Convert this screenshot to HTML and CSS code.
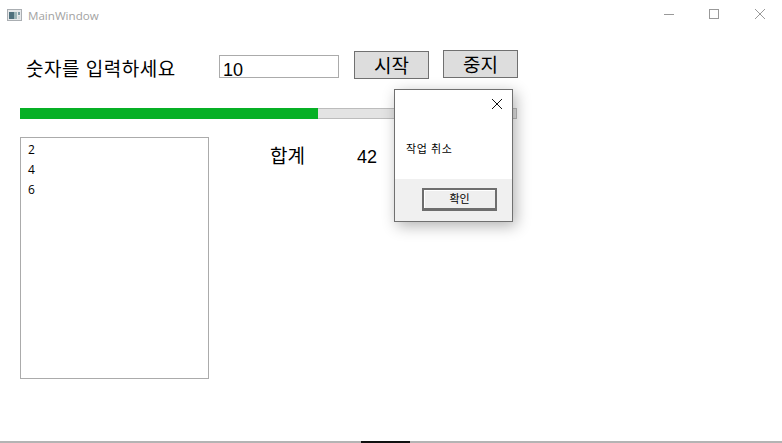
FILE: index.html
```html
<!DOCTYPE html>
<html lang="ko">
<head>
  <meta charset="UTF-8">
  <meta name="viewport" content="width=device-width, initial-scale=1.0">
  <title>MainWindow</title>
  <link rel="stylesheet" href="styles.css">
</head>
<body>
  <div class="window">
    <div class="titlebar">
      <svg class="app-icon" width="16" height="16" viewBox="0 0 16 16">
        <rect x="0.5" y="2.5" width="14" height="11" fill="#e6e8ea" stroke="#aaaeb2"/>
        <rect x="2" y="5" width="5" height="7" fill="#4f707d"/>
        <rect x="7" y="5" width="3" height="7" fill="#9db5b8"/>
        <rect x="11" y="5" width="2" height="3" fill="#7f9ba6"/>
        <rect x="11" y="9" width="2" height="3" fill="#d4d9db"/>
      </svg>
      <span class="app-name">MainWindow</span>
      <div class="win-buttons">
        <svg width="12" height="12" viewBox="0 0 12 12"><path d="M1 6.5H11" stroke="#999" fill="none"/></svg>
        <svg width="12" height="12" viewBox="0 0 12 12"><rect x="1.5" y="1.5" width="9" height="9" stroke="#999" fill="none"/></svg>
        <svg class="win-close" width="12" height="12" viewBox="0 0 12 12"><path d="M1 1L11 11M11 1L1 11" stroke="#999" fill="none"/></svg>
      </div>
    </div>

    <div class="input-row">
      <label class="prompt">숫자를 입력하세요</label>
      <div class="num-input">10</div>
      <button class="btn btn-start">시작</button>
      <button class="btn btn-stop">중지</button>
    </div>

    <div class="progress"><div class="progress-fill"></div></div>

    <div class="result-row">
      <ul class="numbers">
        <li>2</li>
        <li>4</li>
        <li>6</li>
      </ul>
      <span class="sum-label">합계</span>
      <span class="sum-value">42</span>
    </div>

    <div class="taskbar"><div class="taskbar-active"></div></div>
  </div>

  <div class="dialog">
    <div class="dialog-head">
      <svg width="12" height="12" viewBox="0 0 12 12"><path d="M1 1L11 11M11 1L1 11" stroke="#111" fill="none"/></svg>
    </div>
    <div class="dialog-body">작업 취소</div>
    <div class="dialog-foot">
      <button class="dialog-ok">확인</button>
    </div>
  </div>
</body>
</html>
```

FILE: styles.css
```css
body {
  margin: 0;
  background: #fff;
  font-family: "Noto Sans CJK KR", "Liberation Sans", sans-serif;
  color: #000;
  overflow: hidden;
}
.window {
  width: 782px;
  height: 443px;
  display: flex;
  flex-direction: column;
  position: relative;
}
.titlebar {
  height: 30px;
  display: flex;
  align-items: center;
  padding-left: 7px;
  flex: none;
}
.app-icon {
  margin-right: 5px;
}
.app-name {
  font-family: "Open Sans", sans-serif;
  font-size: 11.6px;
  color: #a2a2a2;
}
.win-buttons {
  margin-left: auto;
  margin-bottom: 2px;
  display: flex;
  gap: 33px;
  padding-right: 16px;
}
.win-close {
  margin-left: 1px;
}
.input-row {
  display: flex;
  height: 58px;
  padding-left: 26px;
  align-items: flex-start;
}
.prompt {
  width: 193px;
  margin-top: 26px;
  font-size: 19px;
  line-height: 24px;
  letter-spacing: 0.5px;
}
.num-input {
  width: 115px;
  height: 21px;
  margin-top: 25px;
  border: 1px solid #ababab;
  font-family: "Liberation Sans", sans-serif;
  font-size: 18px;
  line-height: 29px;
  padding-left: 3px;
}
.btn {
  width: 75px;
  height: 28px;
  padding: 0;
  background: #dddddd;
  border: 1px solid #707070;
  font-family: inherit;
  font-size: 19px;
  line-height: 24px;
}
.btn-start {
  margin: 21px 0 0 15px;
}
.btn-stop {
  margin: 20px 0 0 14px;
}
.progress {
  flex: none;
  width: 497px;
  height: 11px;
  margin: 20px 0 0 20px;
  background: #e3e3e3;
  box-sizing: border-box;
  border: 1px solid #bcbcbc;
  border-left: 0;
}
.progress-fill {
  width: 298px;
  height: 11px;
  margin-top: -1px;
  background: #06b025;
}
.result-row {
  display: flex;
  margin: 18px 0 0 20px;
  align-items: flex-start;
}
.numbers {
  list-style: none;
  margin: 0;
  padding: 2px 0 0 7px;
  width: 180px;
  height: 238px;
  border: 1px solid #ababab;
  font-family: "Open Sans", sans-serif;
  font-size: 12px;
}
.numbers li {
  height: 20px;
  line-height: 20px;
}
.sum-label {
  margin: 4px 0 0 61px;
  font-size: 19px;
  line-height: 28px;
}
.sum-value {
  margin: 6px 0 0 52px;
  font-family: "Liberation Sans", sans-serif;
  font-size: 18px;
  line-height: 28px;
}
.taskbar {
  margin-top: auto;
  height: 2px;
  background: #b4b4b4;
  display: flex;
  justify-content: center;
  padding-right: 11px;
}
.taskbar-active {
  width: 49px;
  height: 2px;
  background: #111;
}
.dialog {
  position: absolute;
  left: 394px;
  top: 89px;
  width: 117px;
  height: 131px;
  display: flex;
  flex-direction: column;
  background: #fff;
  border: 1px solid #707070;
  box-shadow: 3px 4px 14px rgba(0, 0, 0, 0.3);
}
.dialog-head {
  height: 20px;
  display: flex;
  justify-content: flex-end;
  align-items: flex-end;
  padding-right: 9px;
  box-sizing: border-box;
  flex: none;
}
.dialog-body {
  flex: 1;
  padding: 30px 0 0 11px;
  font-size: 11px;
  line-height: 16px;
  letter-spacing: 0.6px;
}
.dialog-foot {
  height: 42px;
  flex: none;
  background: #f0f0f0;
  box-sizing: border-box;
  padding: 9px 0 0 27px;
}
.dialog-ok {
  display: block;
  width: 75px;
  height: 23px;
  padding: 0 0 4px;
  background: #efefef;
  border: 2px solid #6e6e6e;
  border-bottom-width: 3px;
  box-shadow: inset 1px 1px 0 #fff;
  font-family: inherit;
  font-size: 11px;
  line-height: 16px;
}
```
